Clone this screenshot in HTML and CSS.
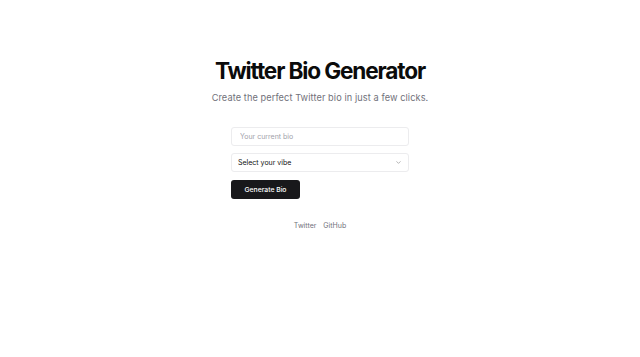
FILE: index.html
```html
<!DOCTYPE html>
<html lang="en">
<head>
<meta charset="utf-8">
<title>Twitter Bio Generator</title>
<link rel="stylesheet" href="styles.css">
</head>
<body>
<main class="page">
  <h1 class="title">Twitter Bio Generator</h1>
  <p class="subtitle">Create the perfect Twitter bio in just a few clicks.</p>
  <form class="form">
    <input class="field" type="text" placeholder="Your current bio">
    <div class="select">
      <span>Select your vibe</span>
      <svg class="chev" width="7" height="7" viewBox="0 0 24 24" fill="none" stroke="#999" stroke-width="2.5" stroke-linecap="round" stroke-linejoin="round"><path d="M6 9l6 6 6-6"/></svg>
    </div>
    <button class="btn" type="button">Generate Bio</button>
  </form>
  <footer class="footer">
    <a class="link" href="#">Twitter</a>
    <a class="link" href="#">GitHub</a>
  </footer>
</main>
</body>
</html>
```
FILE: styles.css
```css
* { box-sizing: border-box; }
html, body { margin: 0; padding: 0; background: #fff; }
body { font-family: Inter, "Noto Sans", sans-serif; color: #111; }
.page {
  display: flex;
  flex-direction: column;
  align-items: center;
  padding-top: 58px;
}
.title {
  margin: 0;
  font-size: 22.6px;
  font-weight: 700;
  letter-spacing: -0.05em;
  line-height: 26px;
  color: #0b0b0b;
}
.subtitle {
  margin: 7px 0 0;
  font-size: 9.2px;
  line-height: 13px;
  color: #71717a;
  letter-spacing: 0.01em;
}
.form {
  margin-top: 23px;
  width: 178px;
  display: flex;
  flex-direction: column;
  align-items: flex-start;
  gap: 7px;
}
.field, .select {
  width: 100%;
  height: 19px;
  border: 1px solid #ececee;
  border-radius: 3px;
  background: #fff;
  font-family: inherit;
  font-size: 7px;
  outline: none;
}
.field { padding: 0 8px; }
.field::placeholder { color: #a1a1aa; }
.select {
  padding: 0 6px;
  display: flex;
  align-items: center;
  justify-content: space-between;
  color: #111;
}
.chev { display: block; }
.btn {
  margin-top: 1px;
  height: 19px;
  width: 69px;
  background: #18181b;
  color: #fff;
  border: none;
  border-radius: 3px;
  font-family: inherit;
  font-size: 6.8px;
  font-weight: 500;
  padding: 0;
}
.footer {
  margin-top: 22px;
  display: flex;
  gap: 7px;
}
.link {
  font-size: 7px;
  color: #71717a;
  text-decoration: none;
}
```
